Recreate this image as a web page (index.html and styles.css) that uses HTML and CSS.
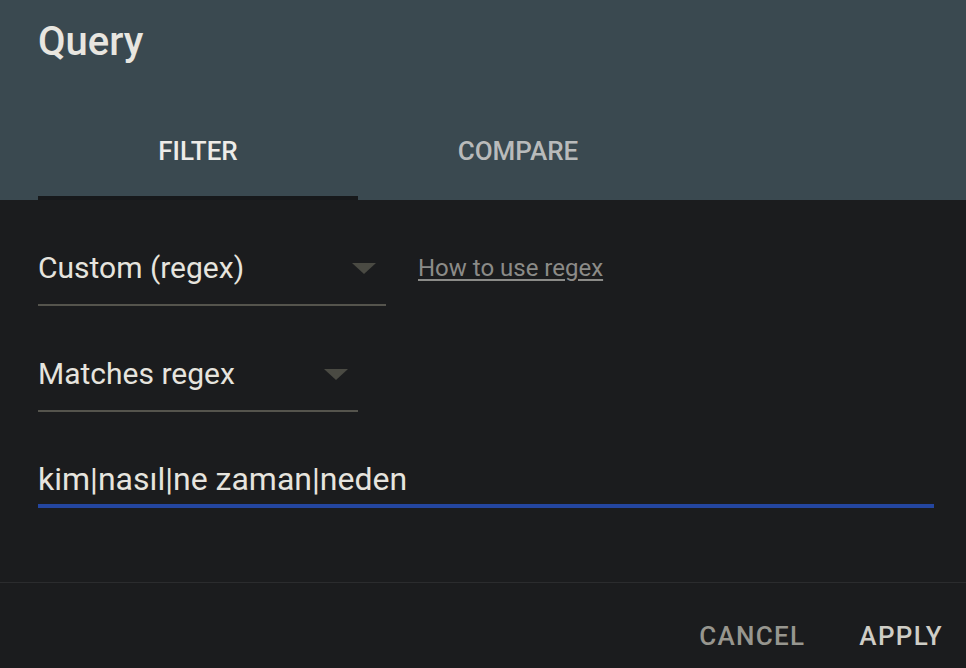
FILE: index.html
```html
<!DOCTYPE html>
<html lang="en">
<head>
    <meta charset="UTF-8">
    <meta name="viewport" content="width=device-width, initial-scale=1.0">
    <title>Query</title>
    <link rel="stylesheet" href="styles.css">
</head>
<body>

    <!-- Header with tabs -->
    <div class="header">
        <h1 class="title">Query</h1>
        <div class="tabs">
            <div class="tab active">FILTER</div>
            <div class="tab">COMPARE</div>
        </div>
    </div>

    <!-- Filter form -->
    <div class="content">
        <div class="row">
            <div class="select wide">
                <span>Custom (regex)</span>
                <span class="arrow"></span>
            </div>
            <a class="help-link" href="#">How to use regex</a>
        </div>

        <div class="select narrow">
            <span>Matches regex</span>
            <span class="arrow"></span>
        </div>

        <div class="text-field">kim|nasıl|ne zaman|neden</div>
    </div>

    <!-- Actions -->
    <div class="actions">
        <button class="btn cancel">CANCEL</button>
        <button class="btn apply">APPLY</button>
    </div>

</body>
</html>
```

FILE: styles.css
```css
/* General Styling */
body {
    margin: 0;
    font-family: Roboto, 'Liberation Sans', sans-serif;
    background: #1b1c1e;
    color: #e6e4de;
}

/* Header */
.header {
    background: #3a4950;
    padding: 0 38px;
    height: 200px;
    display: flex;
    flex-direction: column;
}

.title {
    margin: 0;
    padding-top: 19px;
    font-size: 40px;
    font-weight: 500;
    line-height: 46px;
    color: #e8e6e0;
}

.tabs {
    display: flex;
    margin-top: auto;
}

.tab {
    width: 320px;
    height: 96px;
    display: flex;
    align-items: center;
    justify-content: center;
    box-sizing: border-box;
    padding-bottom: 2px;
    font-size: 26px;
    font-weight: 500;
    color: #b9bbbb;
}

.tab.active {
    color: #eeece8;
    border-bottom: 4px solid #17191b;
    padding-bottom: 0;
    padding-top: 2px;
}

/* Form */
.content {
    padding: 0 32px 74px 38px;
    border-bottom: 1px solid #2b2c2e;
}

.row {
    display: flex;
    align-items: flex-start;
    padding-top: 32px;
}

.select {
    height: 72px;
    display: flex;
    align-items: center;
    justify-content: space-between;
    border-bottom: 2px solid #55544d;
    font-size: 30px;
    line-height: 1;
    padding-right: 10px;
    box-sizing: content-box;
}

.select.wide {
    width: 338px;
}

.select.narrow {
    width: 310px;
    margin-top: 32px;
}

.arrow {
    width: 0;
    height: 0;
    border-left: 12px solid transparent;
    border-right: 12px solid transparent;
    border-top: 11px solid #4a4a43;
}

.help-link {
    margin-left: 32px;
    height: 72px;
    display: flex;
    align-items: center;
    font-size: 24px;
    color: #8b8b88;
    text-decoration: underline;
    text-underline-offset: 3px;
}

.text-field {
    margin-top: 42px;
    height: 50px;
    display: flex;
    align-items: center;
    font-size: 32px;
    line-height: 1;
    border-bottom: 4px solid #2446a0;
}

/* Actions */
.actions {
    display: flex;
    justify-content: flex-end;
    gap: 54px;
    padding: 40px 23px 0 0;
}

.btn {
    background: none;
    border: none;
    padding: 0;
    font-family: Roboto, 'Liberation Sans', sans-serif;
    font-size: 26px;
    font-weight: 500;
    line-height: 1;
    letter-spacing: 1.3px;
    cursor: pointer;
}

.cancel {
    color: #97968f;
}

.apply {
    color: #cfcdc6;
}
```
